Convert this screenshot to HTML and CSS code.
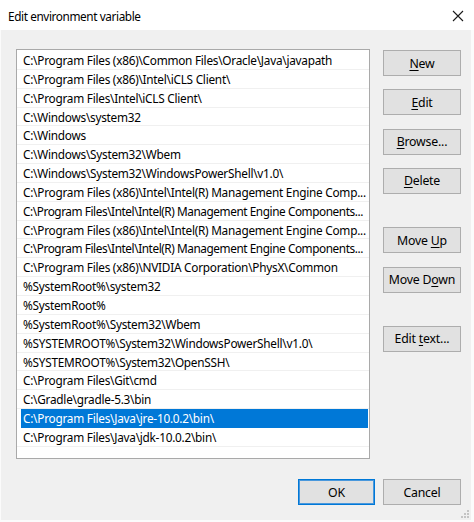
FILE: index.html
```html
<!DOCTYPE html>
<html>
<head>
<meta charset="utf-8">
<link rel="stylesheet" href="styles.css">
</head>
<body>
<div class="window">
  <div class="titlebar">
    <span class="title">Edit environment variable</span>
    <svg class="close" width="12" height="12" viewBox="0 0 12 12"><path d="M1 1L11 11M11 1L1 11" stroke="#1a1a1a" stroke-width="1.1" fill="none"/></svg>
  </div>
  <div class="panel">
    <div class="main">
      <div class="list">
        <div class="row">C:\Program Files (x86)\Common Files\Oracle\Java\javapath</div>
        <div class="row">C:\Program Files (x86)\Intel\iCLS Client\</div>
        <div class="row">C:\Program Files\Intel\iCLS Client\</div>
        <div class="row">C:\Windows\system32</div>
        <div class="row">C:\Windows</div>
        <div class="row">C:\Windows\System32\Wbem</div>
        <div class="row">C:\Windows\System32\WindowsPowerShell\v1.0\</div>
        <div class="row">C:\Program Files (x86)\Intel\Intel(R) Management Engine Comp...</div>
        <div class="row tight">C:\Program Files\Intel\Intel(R) Management Engine Components...</div>
        <div class="row">C:\Program Files (x86)\Intel\Intel(R) Management Engine Comp...</div>
        <div class="row tight">C:\Program Files\Intel\Intel(R) Management Engine Components...</div>
        <div class="row">C:\Program Files (x86)\NVIDIA Corporation\PhysX\Common</div>
        <div class="row">%SystemRoot%\system32</div>
        <div class="row">%SystemRoot%</div>
        <div class="row">%SystemRoot%\System32\Wbem</div>
        <div class="row">%SYSTEMROOT%\System32\WindowsPowerShell\v1.0\</div>
        <div class="row">%SYSTEMROOT%\System32\OpenSSH\</div>
        <div class="row">C:\Program Files\Git\cmd</div>
        <div class="row">C:\Gradle\gradle-5.3\bin</div>
        <div class="row sel">C:\Program Files\Java\jre-10.0.2\bin\</div>
        <div class="row">C:\Program Files\Java\jdk-10.0.2\bin\</div>
      </div>
      <div class="side">
        <button class="btn"><span><u>N</u>ew</span></button>
        <button class="btn"><span><u>E</u>dit</span></button>
        <button class="btn"><span><u>B</u>rowse...</span></button>
        <button class="btn"><span><u>D</u>elete</span></button>
        <button class="btn group"><span>Move <u>U</u>p</span></button>
        <button class="btn"><span>Move D<u>o</u>wn</span></button>
        <button class="btn group"><span>Edit <u>t</u>ext...</span></button>
      </div>
    </div>
    <div class="footer">
      <button class="btn ok"><span>OK</span></button>
      <button class="btn"><span>Cancel</span></button>
    </div>
    <svg class="grip" width="10" height="10" viewBox="0 0 10 10">
      <rect x="7" y="1" width="2" height="2" fill="#c4c4c4"/>
      <rect x="4" y="4" width="2" height="2" fill="#c4c4c4"/>
      <rect x="7" y="4" width="2" height="2" fill="#c4c4c4"/>
      <rect x="1" y="7" width="2" height="2" fill="#c4c4c4"/>
      <rect x="4" y="7" width="2" height="2" fill="#c4c4c4"/>
      <rect x="7" y="7" width="2" height="2" fill="#c4c4c4"/>
    </svg>
  </div>
</div>
</body>
</html>
```

FILE: styles.css
```css
* { box-sizing: border-box; }
html, body { margin: 0; padding: 0; background: #ffffff; }
body {
  font-family: "Noto Sans", "Open Sans", sans-serif;
  font-size: 11.8px;
  letter-spacing: -0.25px;
  color: #000;
}
.window {
  width: 474px;
  height: 522px;
  display: flex;
  flex-direction: column;
  background: #fbfbfb;
}
.titlebar {
  height: 30px;
  flex: none;
  display: flex;
  align-items: center;
  justify-content: space-between;
  padding: 0 10px 0 8px;
  background: #ffffff;
}
.title { font-size: 11.8px; letter-spacing: -0.4px; color: #000; padding-top: 1px; }
.close { display: block; margin-top: 1px; }
.panel {
  position: relative;
  flex: 1;
  margin: 0 3px 2px 1px;
  background: #f0f0f0;
  display: flex;
  flex-direction: column;
}
.main {
  display: flex;
  padding: 19px 0 0 15px;
}
.list {
  width: 354px;
  height: 410px;
  border: 1px solid #a9a9a9;
  background: #ffffff;
  padding-top: 1px;
  overflow: hidden;
}
.row {
  height: 18.85px;
  line-height: 16.85px;
  padding-top: 1px;
  border-bottom: 1px solid #f0f0f0;
  padding-left: 6px;
  white-space: nowrap;
  overflow: hidden;
  color: #000;
}
.row.tight { letter-spacing: -0.43px; }
.row.sel {
  background: #0078d7;
  color: #ffffff;
  margin: 0 1px 0 4px;
  padding-left: 2px;
  border-bottom-color: #0078d7;
}
.side {
  display: flex;
  flex-direction: column;
  margin-left: 13px;
  padding-top: 1px;
  gap: 13.33px;
}
.btn {
  width: 78px;
  height: 26px;
  background: #e1e1e1;
  border: 1px solid #adadad;
  font-family: inherit;
  font-size: 12.3px;
  letter-spacing: -0.2px;
  color: #000;
  padding: 0;
  margin: 0;
  display: flex;
  align-items: center;
  justify-content: center;
  white-space: nowrap;
}
.btn u { text-decoration-thickness: 1px; text-underline-offset: 2px; }
.side .group { margin-top: 20px; }
.footer {
  display: flex;
  justify-content: flex-end;
  gap: 8px;
  padding: 20px 10px 0 0;
}
.btn.ok {
  width: 77px;
  border: 1px solid #0078d7;
  box-shadow: inset 0 0 0 1px #4a98dc;
}
.grip {
  position: absolute;
  right: 1px;
  bottom: 1px;
}
```
